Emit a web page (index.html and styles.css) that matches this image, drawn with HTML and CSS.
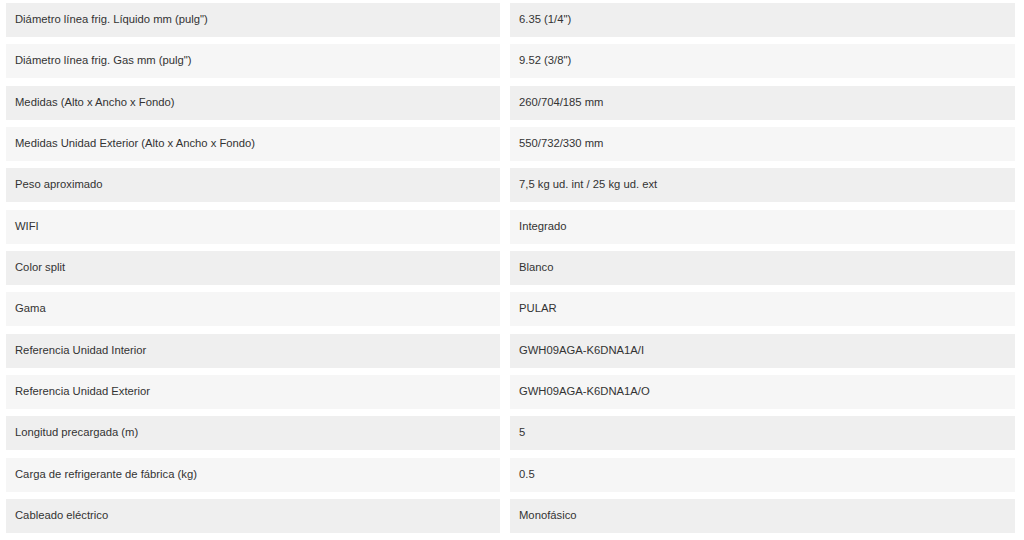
FILE: index.html
```html
<!DOCTYPE html>
<html lang="es">
<head>
<meta charset="utf-8">
<link rel="stylesheet" href="styles.css">
</head>
<body>
<div class="specs">
  <div class="row"><div class="cell">Diámetro línea frig. Líquido mm (pulg")</div><div class="cell">6.35 (1/4")</div></div>
  <div class="row"><div class="cell">Diámetro línea frig. Gas mm (pulg")</div><div class="cell">9.52 (3/8")</div></div>
  <div class="row"><div class="cell">Medidas (Alto x Ancho x Fondo)</div><div class="cell">260/704/185 mm</div></div>
  <div class="row"><div class="cell">Medidas Unidad Exterior (Alto x Ancho x Fondo)</div><div class="cell">550/732/330 mm</div></div>
  <div class="row"><div class="cell">Peso aproximado</div><div class="cell">7,5 kg ud. int / 25 kg ud. ext</div></div>
  <div class="row"><div class="cell">WIFI</div><div class="cell">Integrado</div></div>
  <div class="row"><div class="cell">Color split</div><div class="cell">Blanco</div></div>
  <div class="row"><div class="cell">Gama</div><div class="cell">PULAR</div></div>
  <div class="row"><div class="cell">Referencia Unidad Interior</div><div class="cell">GWH09AGA-K6DNA1A/I</div></div>
  <div class="row"><div class="cell">Referencia Unidad Exterior</div><div class="cell">GWH09AGA-K6DNA1A/O</div></div>
  <div class="row"><div class="cell">Longitud precargada (m)</div><div class="cell">5</div></div>
  <div class="row"><div class="cell">Carga de refrigerante de fábrica (kg)</div><div class="cell">0.5</div></div>
  <div class="row"><div class="cell">Cableado eléctrico</div><div class="cell">Monofásico</div></div>
</div>
</body>
</html>
```
FILE: styles.css
```css
html, body {
  margin: 0;
  padding: 0;
  background: #ffffff;
}
body {
  font-family: "Liberation Sans", Arial, sans-serif;
  font-size: 11.25px;
  color: #333333;
}
.specs {
  display: flex;
  flex-direction: column;
  gap: 7.35px;
  padding: 3px 0 0 6px;
  width: 1009px;
}
.row {
  display: grid;
  grid-template-columns: 494px 505px;
  column-gap: 10px;
}
.cell {
  height: 34px;
  display: flex;
  align-items: center;
  padding-left: 9px;
  padding-bottom: 2px;
  box-sizing: border-box;
  background: #efefef;
}
.row:nth-child(even) .cell {
  background: #f6f6f6;
}
```
